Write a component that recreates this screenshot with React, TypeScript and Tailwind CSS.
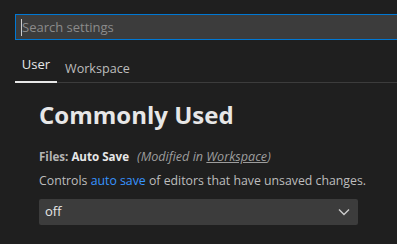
import React from "react";

export default function App() {
  return (
    <div
      className="w-[397px] h-[244px] bg-[#1f1f1f] overflow-hidden text-[#cccccc]"
      style={{ fontFamily: '"Open Sans", "Noto Sans", sans-serif' }}
    >
      <div className="pt-[14px] pl-[15px]">
        <div className="h-[26px] w-[400px] border border-[#0078d4] bg-[#3c3c3c] flex items-center pl-[5px]">
          <span className="w-px h-[17px] bg-[#cccccc]" />
          <span className="text-[13px] text-[#8b8b8b] leading-none">Search settings</span>
        </div>
      </div>
      <div className="pl-[15px] mt-[13px]">
        <div className="flex border-b border-[#3c3c3c] h-[30px] items-start">
          <div className="h-[30px] w-[42px] border-b-2 border-[#e7e7e7] -mb-px flex justify-center pt-[2px]">
            <span className="text-[13px] text-[#e7e7e7]">User</span>
          </div>
          <div className="pl-[8px] pt-[2px]">
            <span className="text-[12.6px] text-[#bdbdbd]">Workspace</span>
          </div>
        </div>
      </div>
      <div className="pl-[39px]">
        <div className="mt-[16px] text-[24px] font-bold text-[#e7e7e7] leading-[32px]">Commonly Used</div>
        <div className="mt-[17px] text-[12.2px] leading-[18px] flex items-baseline">
          <span className="font-bold text-[#b5b5b5] text-[11.6px]">Files:&nbsp;</span>
          <span className="font-bold text-[#e7e7e7] text-[11.6px]">Auto Save</span>
          <span className="italic text-[#9d9d9d] ml-[8px] text-[12.6px]">
            (Modified in <span className="underline">Workspace</span>)
          </span>
        </div>
        <div className="mt-[6px] text-[12.3px] leading-[18px] text-[#bdbdbd]">
          Controls <span className="text-[#3794ff]">auto save</span> of editors that have unsaved changes.
        </div>
        <div className="mt-[9px] w-[319px] h-[26px] bg-[#3c3c3c] rounded-[2px] flex items-center justify-between pl-[6px] pr-[8px]">
          <span className="text-[13px] text-[#e7e7e7]">off</span>
          <svg width="12" height="8" viewBox="0 0 12 8" fill="none">
            <path d="M1 1.5 L6 6.5 L11 1.5" stroke="#cccccc" strokeWidth="1.4" />
          </svg>
        </div>
      </div>
    </div>
  );
}
